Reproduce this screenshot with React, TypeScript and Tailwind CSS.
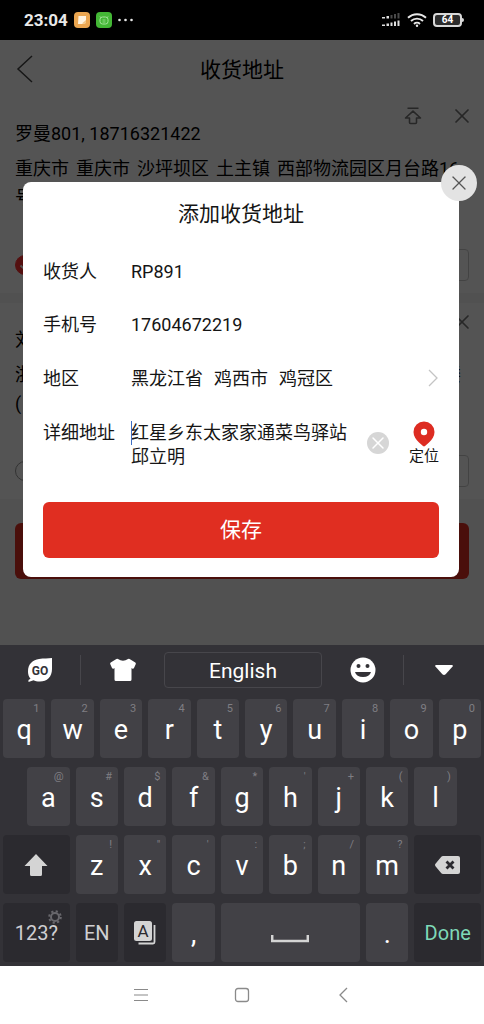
import { useState } from "react"
import { X } from "lucide-react"

type Key = { label: string; hint?: string }

const row1: Key[] = [
  { label: "q", hint: "1" },
  { label: "w", hint: "2" },
  { label: "e", hint: "3" },
  { label: "r", hint: "4" },
  { label: "t", hint: "5" },
  { label: "y", hint: "6" },
  { label: "u", hint: "7" },
  { label: "i", hint: "8" },
  { label: "o", hint: "9" },
  { label: "p", hint: "0" },
]

const row2: Key[] = [
  { label: "a", hint: "@" },
  { label: "s", hint: "#" },
  { label: "d", hint: "$" },
  { label: "f", hint: "&" },
  { label: "g", hint: "*" },
  { label: "h", hint: "'" },
  { label: "j", hint: "+" },
  { label: "k", hint: "(" },
  { label: "l", hint: ")" },
]

const row3: Key[] = [
  { label: "z", hint: "!" },
  { label: "x", hint: "\"" },
  { label: "c", hint: "'" },
  { label: "v", hint: ":" },
  { label: "b", hint: ";" },
  { label: "n", hint: "/" },
  { label: "m", hint: "?" },
]

function StatusBar() {
  return (
    <div className="flex h-10 items-center justify-between bg-black pr-5 pl-6 text-[#e8e8e8]">
      <div className="flex items-center gap-1.5">
        <span className="text-[17px] leading-5 font-bold">23:04</span>
        <svg width="16" height="16" viewBox="0 0 16 16">
          <rect width="16" height="16" rx="4" fill="#eba650" />
          <path d="M4.500 4h7.500v6.500L10.500 12H4z" fill="#fff3df" />
          <path d="M8 11.500 12 8v2.500L10.500 12z" fill="#f3c583" />
        </svg>
        <svg width="16" height="16" viewBox="0 0 16 16">
          <rect width="16" height="16" rx="4" fill="#43b735" />
          <path d="M4 4.500 5.500 6M12 4.500 10.500 6" stroke="#a5e39b" />
          <rect x="4" y="5" width="8" height="7" rx="2.500" fill="none" stroke="#a5e39b" />
          <path d="M6.500 8h3M6.500 10h3" stroke="#a5e39b" strokeWidth=".8" />
        </svg>
        <svg width="16" height="16" viewBox="0 0 16 16" fill="#e8e8e8">
          <circle cx="1.500" cy="8" r="1.300" />
          <circle cx="7.500" cy="8" r="1.300" />
          <circle cx="13.500" cy="8" r="1.300" />
        </svg>
      </div>
      <div className="flex items-center gap-1.5">
        <svg width="19" height="16" viewBox="0 0 19 16" fill="#e0e0e0">
          <path d="M0 5h3v1.500H0zM4.500 4h2.500v2.500H4.500z" />
          <path d="M8.500 3h2v3.500h-2zM12 2h2v4.500h-2zM15.500 1h2v5.500h-2z" fill="#4a4a4a" />
          <path d="M0 12.500h3V14H0zM4.500 11.500h2.500V14H4.500zM8.500 10.500h2V14h-2zM12 9.500h2V14h-2zM15.500 8.500h2V14h-2z" />
        </svg>
        <svg width="20" height="16" viewBox="0 0 20 16" fill="none" stroke="#e8e8e8" strokeWidth="1.900">
          <path d="M1 5.800a13 13 0 0 1 18 0M4 9a8.800 8.800 0 0 1 12 0M7 12a4.300 4.300 0 0 1 6 0" />
          <circle cx="10" cy="13.700" r="1.200" fill="#e8e8e8" stroke="none" />
        </svg>
        <div className="flex items-center">
          <div className="flex h-[14px] w-[29px] items-center justify-center rounded-[4px] border-2 border-[#d8d8d8] bg-[#2c2c2c] text-[10px] leading-[10px] font-bold text-white">
            64
          </div>
          <div className="h-1 w-0.5 rounded-r-sm bg-[#d8d8d8]" />
        </div>
      </div>
    </div>
  )
}

function AddressCard({ name, address, selected }: { name: string; address: React.ReactNode; selected?: boolean }) {
  return (
    <section className="bg-white px-[15px] pb-3">
      <div className="flex items-start justify-between">
        <h2 className="pt-6 text-[18px] leading-[26px]">{name}</h2>
        <div className="-mr-[5px] flex items-center gap-7 pt-[7px] text-[#777]">
          {selected && (
            <button aria-label="置顶">
              <svg width="18" height="18" viewBox="0 0 18 18" fill="none" stroke="currentColor" strokeWidth="1.600">
                <path d="M3.500 1.200h11M9 4.200 1.500 11h4v4.500q0 1 1 1h5q1 0 1-1V11h4z" strokeLinejoin="round" />
              </svg>
            </button>
          )}
          <button aria-label="删除">
            <X size={24} strokeWidth={1.7} />
          </button>
        </div>
      </div>
      <div className="mt-[7px] min-h-[58px] text-[18px] leading-[29px]">{address}</div>
      <div className="mt-[37px] flex items-center justify-between">
        <span className="relative flex">
          <input
            type="radio"
            name="address"
            aria-label={name}
            defaultChecked={selected}
            className="size-5 appearance-none rounded-full border border-[#999] checked:border-[#ff3333] checked:bg-[#ff3333]"
          />
          {selected && (
            <svg className="pointer-events-none absolute inset-0" width="20" height="20" viewBox="0 0 20 20" fill="none" stroke="#fff" strokeWidth="1.800">
              <path d="m5.500 10.500 3.500 3.300L15 7" />
            </svg>
          )}
        </span>
        <button aria-label="编辑" className="h-8 w-16 rounded-[4px] border border-[#ccc]" />
      </div>
    </section>
  )
}

function AddressPage() {
  return (
    <div className="bg-[#f5f5f5] pb-[66px] text-black">
      <header className="grid h-[57px] grid-cols-3 items-center bg-white px-[15px]">
        <button aria-label="返回">
          <svg width="20" height="28" viewBox="0 0 20 28" fill="none" stroke="#444" strokeWidth="1.500">
            <path d="M17 1 3 14l14 13" />
          </svg>
        </button>
        <h1 className="pt-0.5 text-center text-[21px] leading-7 whitespace-nowrap">收货地址</h1>
      </header>
      <AddressCard
        selected
        name="罗曼801, 18716321422"
        address={
          <>
            <div className="flex gap-[7px] whitespace-nowrap">
              <span>重庆市</span>
              <span>重庆市</span>
              <span>沙坪坝区</span>
              <span>土主镇</span>
              <span>西部物流园区月台路16</span>
            </div>
            <div>号</div>
          </>
        }
      />
      <div className="h-2.5" />
      <AddressCard
        name="刘"
        address={
          <>
            <div className="flex justify-between pr-2">
              <span>浙</span>
              <span>楼</span>
            </div>
            <div>(</div>
          </>
        }
      />
      <div className="px-[15px] pt-6">
        <button aria-label="新建地址" className="block h-14 w-full rounded-md bg-[#e02e24]" />
      </div>
    </div>
  )
}

function AddressDialog() {
  const [name, setName] = useState("RP891")
  const [phone, setPhone] = useState("17604672219")
  const [detail, setDetail] = useState("红星乡东太家家通菜鸟驿站邱立明")

  return (
    <div
      role="dialog"
      aria-labelledby="dialog-title"
      className="absolute top-[142px] right-[25px] left-[23px] rounded-lg bg-white px-5 pb-[19px] text-[18px] text-[#151515]"
    >
      <button
        aria-label="关闭"
        className="absolute -top-[17px] -right-[18px] flex size-9 items-center justify-center rounded-full bg-[#e3e3e3] text-[#555]"
      >
        <X size={24} strokeWidth={1.3} />
      </button>
      <h2 id="dialog-title" className="pt-[18px] pb-4 text-center text-[21px] leading-7">
        添加收货地址
      </h2>
      <div className="flex h-[54px] items-center">
        <label htmlFor="name" className="w-[88px] shrink-0">收货人</label>
        <input id="name" value={name} onChange={(e) => setName(e.target.value)} className="min-w-0 flex-1 outline-none" />
      </div>
      <div className="flex h-[53px] items-center">
        <label htmlFor="phone" className="w-[88px] shrink-0">手机号</label>
        <input id="phone" value={phone} onChange={(e) => setPhone(e.target.value)} className="min-w-0 flex-1 outline-none" />
      </div>
      <div className="flex h-[54px] items-center">
        <span id="region" className="w-[88px] shrink-0">地区</span>
        <button aria-labelledby="region" className="flex flex-1 items-center gap-[11px]">
          <span>黑龙江省</span>
          <span>鸡西市</span>
          <span>鸡冠区</span>
          <svg className="ml-auto" width="12" height="18" viewBox="0 0 12 18" fill="none" stroke="#c4c4c4" strokeWidth="1.300">
            <path d="m2 1 8 8-8 8" />
          </svg>
        </button>
      </div>
      <div className="flex items-start pt-4 leading-6">
        <label htmlFor="detail" className="w-[88px] shrink-0">详细地址</label>
        <div className="relative flex-1">
          <textarea
            id="detail"
            rows={2}
            value={detail}
            onChange={(e) => setDetail(e.target.value)}
            className="block w-full resize-none overflow-hidden outline-none"
          />
          <span className="absolute top-0 left-0 h-6 w-px bg-[#3f6fc4]" />
        </div>
        <button
          aria-label="清空"
          onClick={() => setDetail("")}
          className="mt-[11px] mr-5 ml-3.5 flex size-[22px] items-center justify-center rounded-full bg-[#d6d6d6] text-white"
        >
          <X size={20} strokeWidth={1.8} />
        </button>
        <button className="flex w-[30px] flex-col items-center text-[15px] leading-[18px] whitespace-nowrap">
          <svg width="22" height="26" viewBox="0 0 22 26">
            <path d="M11 .5A10.500 10.500 0 0 0 .5 11c0 4 2.500 7.500 5.500 10.500l4 3.600q1 .8 2 0l4-3.600c3-3 5.500-6.500 5.500-10.500A10.500 10.500 0 0 0 11 .5z" fill="#dd2c22" />
            <circle cx="11" cy="11" r="3.200" fill="#fff" />
          </svg>
          定位
        </button>
      </div>
      <button className="mt-[33px] block h-14 w-full rounded-md bg-[#e02e21] pt-0.5 text-[21px] text-white">
        保存
      </button>
    </div>
  )
}

function LetterKey({ label, hint, className = "" }: Key & { className?: string }) {
  return (
    <button className={`relative col-span-2 rounded-[4px] bg-[#424146] pt-0.5 text-[27px] leading-8 text-white ${className}`}>
      {label}
      {hint && <span className="absolute top-1 right-1.5 text-[11px] leading-3 text-[#7f7e83]">{hint}</span>}
    </button>
  )
}

function Keyboard() {
  return (
    <div className="bg-[#333237] pb-1">
      <div className="grid h-[54px] grid-cols-[81fr_83fr_158fr_82fr_80fr] items-center pb-1">
        <button aria-label="GO" className="flex h-[30px] items-center justify-center border-r border-[#47464b]">
          <svg width="26" height="26" viewBox="0 0 26 26">
            <path d="M25 1v11c0 8-5 12.500-12 12.500-3 0-5-.5-6.500-1.300L1.500 25v-2l2-1.200C1.500 19.500 1 17 1 14.500 1 6.500 6 3 12 2 17 1.200 21 1.500 25 1z" fill="#fff" />
            <text x="13" y="17.500" textAnchor="middle" fontSize="12" fontWeight="700" fill="#333237">GO</text>
          </svg>
        </button>
        <button aria-label="主题" className="flex justify-center">
          <svg width="28" height="26" viewBox="0 0 28 26" fill="#fff">
            <path d="M9 2q5 3.500 10 0 .8-.4 1.600 0l5.700 3.500q.9.700.4 1.700L25 11q-.5 1-1.500.7L22.500 11v11.500q0 1.500-1.500 1.500H7q-1.500 0-1.500-1.500V11l-1 .7Q3.500 12 3 11L1.300 7.200q-.5-1 .4-1.700L7.400 2q.8-.4 1.600 0z" />
          </svg>
        </button>
        <button className="h-9 rounded-[4px] border border-[#47464b] pt-0.5 text-[21px] leading-8 text-white">English</button>
        <button aria-label="表情" className="flex h-[30px] items-center justify-center border-r border-[#47464b]">
          <svg width="26" height="26" viewBox="0 0 26 26">
            <circle cx="13" cy="13" r="12.500" fill="#fff" />
            <circle cx="8.500" cy="9" r="2" fill="#333237" />
            <circle cx="17.500" cy="9" r="2" fill="#333237" />
            <path d="M5 15h16a8.200 6.500 0 0 1-16 0z" fill="#333237" />
          </svg>
        </button>
        <button aria-label="收起" className="flex justify-center">
          <svg width="20" height="12" viewBox="0 0 20 12" fill="#fff">
            <path d="M2 1h16q1.500.3.600 1.500l-7 7.800q-1.600 1.400-3.200 0l-7-7.800Q.5 1.300 2 1z" />
          </svg>
        </button>
      </div>
      <div className="grid auto-rows-[59px] grid-cols-[repeat(20,minmax(0,1fr))] gap-x-1.5 gap-y-[9px] px-[3px]">
        {row1.map((k) => (
          <LetterKey key={k.label} {...k} />
        ))}
        {row2.map((k, i) => (
          <LetterKey key={k.label} {...k} className={i === 0 ? "col-start-2" : ""} />
        ))}
        <button aria-label="Shift" className="col-span-3 col-start-1 flex items-center justify-center rounded-[4px] bg-[#2b2a2f]">
          <svg width="24" height="24" viewBox="0 0 24 24" fill="#d4d4d4">
            <path d="M12 1 23.500 13H18v8.500q0 1.500-1.500 1.500h-9Q6 23 6 21.500V13H.5z" />
          </svg>
        </button>
        {row3.map((k) => (
          <LetterKey key={k.label} {...k} />
        ))}
        <button aria-label="Backspace" className="col-span-3 flex items-center justify-center rounded-[4px] bg-[#2b2a2f]">
          <svg width="25" height="18" viewBox="0 0 25 18">
            <path d="M8 0h15q2 0 2 2v14q0 2-2 2H8q-1 0-1.700-.8L.5 10.200q-1-1.200 0-2.400L6.300.8Q7 0 8 0z" fill="#d4d4d4" />
            <path d="m11.500 5.500 7 7m0-7-7 7" stroke="#2b2a2f" strokeWidth="2.800" />
          </svg>
        </button>
        <button className="relative col-span-3 rounded-[4px] bg-[#2b2a2f] text-[20px] text-[#cfcfd2]">
          123?
          <svg className="absolute top-[7px] right-2" width="14" height="14" viewBox="0 0 14 14" fill="none" stroke="#68676c">
            <circle cx="7" cy="7" r="4" strokeWidth="2" />
            <circle cx="7" cy="7" r="5.800" strokeWidth="2" strokeDasharray="2.200 2.355" />
          </svg>
        </button>
        <button className="col-span-2 rounded-[4px] bg-[#2b2a2f] text-[20px] text-[#cfcfd2]">EN</button>
        <button aria-label="A" className="col-span-2 flex items-center justify-center rounded-[4px] bg-[#2b2a2f]">
          <svg width="22" height="24" viewBox="0 0 22 24">
            <path d="M20.500 4v17q0 1.500-1.500 1.500H4.500" fill="none" stroke="#d4d4d4" strokeWidth="1.800" />
            <rect width="18" height="20" rx="2.500" fill="#d4d4d4" />
            <text x="9" y="16" textAnchor="middle" fontSize="17" fill="#2b2a2f">A</text>
          </svg>
        </button>
        <LetterKey label="," />
        <button aria-label="Space" className="col-span-6 flex items-center justify-center rounded-[4px] bg-[#424146] pt-3">
          <svg width="38" height="8" viewBox="0 0 38 8" fill="none" stroke="#d4d4d4" strokeWidth="2.500">
            <path d="M1.200 0v6h35.600V0" />
          </svg>
        </button>
        <LetterKey label="." />
        <button className="col-span-3 rounded-[4px] bg-[#2b2a2f] text-[20px] text-[#7fd9b8]">Done</button>
      </div>
    </div>
  )
}

function NavBar() {
  return (
    <nav className="flex h-[58px] items-center justify-center gap-[85px] bg-white text-[#8a8a8a]">
      <button aria-label="Recents">
        <svg width="16" height="16" viewBox="0 0 16 16" stroke="currentColor" strokeWidth="1.200">
          <path d="M1 2.500h14M1 8h14M1 13.500h14" />
        </svg>
      </button>
      <button aria-label="Home">
        <svg width="16" height="16" viewBox="0 0 16 16" fill="none" stroke="currentColor" strokeWidth="1.300">
          <rect x="1.500" y="1.500" width="13" height="13" rx="2.500" />
        </svg>
      </button>
      <button aria-label="Back">
        <svg width="16" height="16" viewBox="0 0 16 16" fill="none" stroke="currentColor" strokeWidth="1.300">
          <path d="m12 1-7 7 7 7" />
        </svg>
      </button>
    </nav>
  )
}

export default function App() {
  return (
    <div className="font-[Roboto,'Noto_Sans_CJK_SC',sans-serif]">
      <StatusBar />
      <main className="relative">
        <AddressPage />
        <div className="absolute inset-0 bg-black/67" />
        <AddressDialog />
      </main>
      <Keyboard />
      <NavBar />
    </div>
  )
}
